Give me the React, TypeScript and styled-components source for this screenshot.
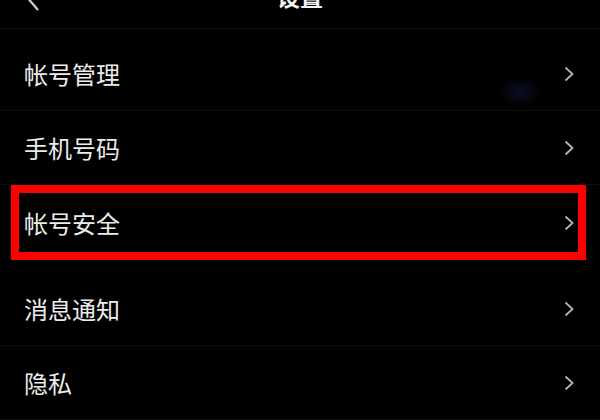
import React from 'react';
import styled, { createGlobalStyle } from 'styled-components';

const GlobalStyle = createGlobalStyle`
  html, body {
    margin: 0;
    padding: 0;
    background: #000;
  }
  body {
    font-family: "Noto Sans CJK SC", "Noto Sans", sans-serif;
  }
`;

const Page = styled.div`
  width: 600px;
  height: 420px;
  overflow: hidden;
  background:
    radial-gradient(ellipse 24px 14px at 520px 92px, rgba(30, 38, 92, 0.38), rgba(0, 0, 0, 0) 100%),
    #000;
  color: #ececec;
`;

const Header = styled.header`
  position: relative;
  height: 66px;
  margin-top: -37px;
  display: flex;
  align-items: center;
  justify-content: center;
  border-bottom: 1px solid #111;
  box-sizing: border-box;
`;

const BackButton = styled.div`
  position: absolute;
  left: 22px;
  top: 16px;
  width: 20px;
  height: 34px;
  color: #cfcfcf;
`;

const Title = styled.h1`
  margin: 0;
  font-size: 23px;
  font-weight: 700;
  color: #f4f4f4;
  letter-spacing: 0;
`;

const List = styled.div`
  display: flex;
  flex-direction: column;
  margin-top: 8px;
`;

const Gap = styled.div`
  height: 12px;
`;

const Row = styled.div<{ $highlight?: boolean }>`
  display: flex;
  align-items: center;
  justify-content: space-between;
  box-sizing: border-box;
  height: ${(p) => (p.$highlight ? '75px' : '74px')};
  ${(p) =>
    p.$highlight
      ? `
    margin: 0 14px 0 11px;
    border: 8px solid #ff0000;
    padding: 0 4px 0 5px;
  `
      : `
    padding: 0 26px 0 24px;
    border-bottom: 1px solid #0d0d0d;
  `}
`;

const Label = styled.span`
  font-size: 24px;
  line-height: 1;
  color: #ececec;
`;

const Chevron = styled.svg`
  width: 10px;
  height: 16px;
  color: #b4b4b4;
  flex: none;
`;

function Arrow() {
  return (
    <Chevron viewBox="0 0 10 16" fill="none">
      <polyline points="1.5,1.5 8.5,8 1.5,14.5" stroke="currentColor" strokeWidth="1.8" />
    </Chevron>
  );
}

type Item = { label: string; highlight?: boolean; gapBefore?: boolean };

const items: Item[] = [
  { label: '帐号管理' },
  { label: '手机号码' },
  { label: '帐号安全', highlight: true },
  { label: '消息通知', gapBefore: true },
  { label: '隐私' },
];

export default function App() {
  return (
    <>
      <GlobalStyle />
      <Page>
        <Header>
          <BackButton>
            <svg width="20" height="34" viewBox="0 0 20 34" fill="none">
              <polyline points="16,3 4,17 16,31" stroke="currentColor" strokeWidth="2.2" />
            </svg>
          </BackButton>
          <Title>设置</Title>
        </Header>
        <List>
          {items.map((item) => (
            <React.Fragment key={item.label}>
              {item.gapBefore && <Gap />}
              <Row $highlight={item.highlight}>
                <Label>{item.label}</Label>
                <Arrow />
              </Row>
            </React.Fragment>
          ))}
        </List>
      </Page>
    </>
  );
}
